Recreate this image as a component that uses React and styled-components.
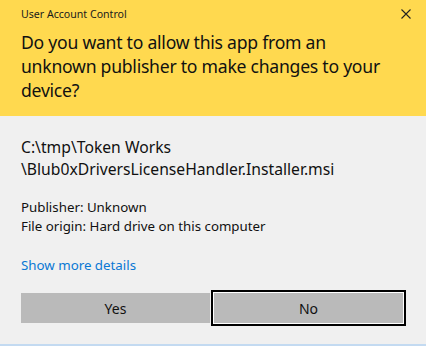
import styled, { createGlobalStyle } from "styled-components";

const GlobalStyle = createGlobalStyle`
  html, body {
    margin: 0;
    padding: 0;
    background: #f0f0f0;
  }
  * {
    box-sizing: border-box;
  }
`;

export const Dialog = styled.div`
  width: 426px;
  height: 346px;
  display: flex;
  flex-direction: column;
  background: #f0f0f0;
  border-bottom: 2px solid #c3daf1;
  font-family: "Segoe UI", "Noto Sans", "Open Sans", sans-serif;
  color: #000000;
`;

export const Header = styled.div`
  height: 116px;
  flex-shrink: 0;
  background: #ffd94f;
  padding: 0 21px;
  display: flex;
  flex-direction: column;
`;

export const TitleBar = styled.div`
  height: 27px;
  display: flex;
  align-items: center;
  justify-content: space-between;
`;

export const Title = styled.span`
  font-size: 10.6px;
  color: #1a1a1a;
`;

export const Close = styled.span`
  display: flex;
  margin-right: -6px;
`;

export const Question = styled.div`
  margin-top: 3px;
  font-size: 17.6px;
  line-height: 24px;
  letter-spacing: -0.25px;
  white-space: nowrap;
  color: #111111;
`;

export const Body = styled.div`
  flex: 1;
  padding: 20px 21px 0;
  display: flex;
  flex-direction: column;
`;

export const Path = styled.div`
  font-size: 15.7px;
  line-height: 22px;
  white-space: nowrap;
  color: #111111;
`;

export const Info = styled.div`
  margin-top: 18px;
  font-size: 13.3px;
  line-height: 19px;
  color: #111111;
`;

export const MoreLink = styled.a`
  margin-top: 20px;
  font-size: 13.3px;
  line-height: 19px;
  color: #0a78d4;
  text-decoration: none;
  cursor: pointer;
`;

export const Buttons = styled.div`
  margin-top: 18px;
  display: flex;
  gap: 4px;
`;

export const Button = styled.button`
  width: 189px;
  height: 30px;
  border: none;
  background: #bababa;
  font-family: inherit;
  font-size: 14px;
  color: #111111;
  padding: 0;
  outline: ${({ $focused }) => ($focused ? "2px solid #000000" : "none")};
  box-shadow: ${({ $focused }) => ($focused ? "0 0 0 1px #ffffff" : "none")};
  outline-offset: 1px;
`;

export default function App() {
  return (
    <>
      <GlobalStyle />
      <Dialog>
        <Header>
          <TitleBar>
            <Title>User Account Control</Title>
            <Close>
              <svg width="10" height="10" viewBox="0 0 10 10">
                <path d="M0.5 0.5 L9.5 9.5 M9.5 0.5 L0.5 9.5" stroke="#222" strokeWidth="1.1" />
              </svg>
            </Close>
          </TitleBar>
          <Question>
            Do you want to allow this app from an
            <br />
            unknown publisher to make changes to your
            <br />
            device?
          </Question>
        </Header>
        <Body>
          <Path>
            C:\tmp\Token Works
            <br />
            \Blub0xDriversLicenseHandler.Installer.msi
          </Path>
          <Info>
            Publisher: Unknown
            <br />
            File origin: Hard drive on this computer
          </Info>
          <MoreLink>Show more details</MoreLink>
          <Buttons>
            <Button>Yes</Button>
            <Button $focused>No</Button>
          </Buttons>
        </Body>
      </Dialog>
    </>
  );
}
